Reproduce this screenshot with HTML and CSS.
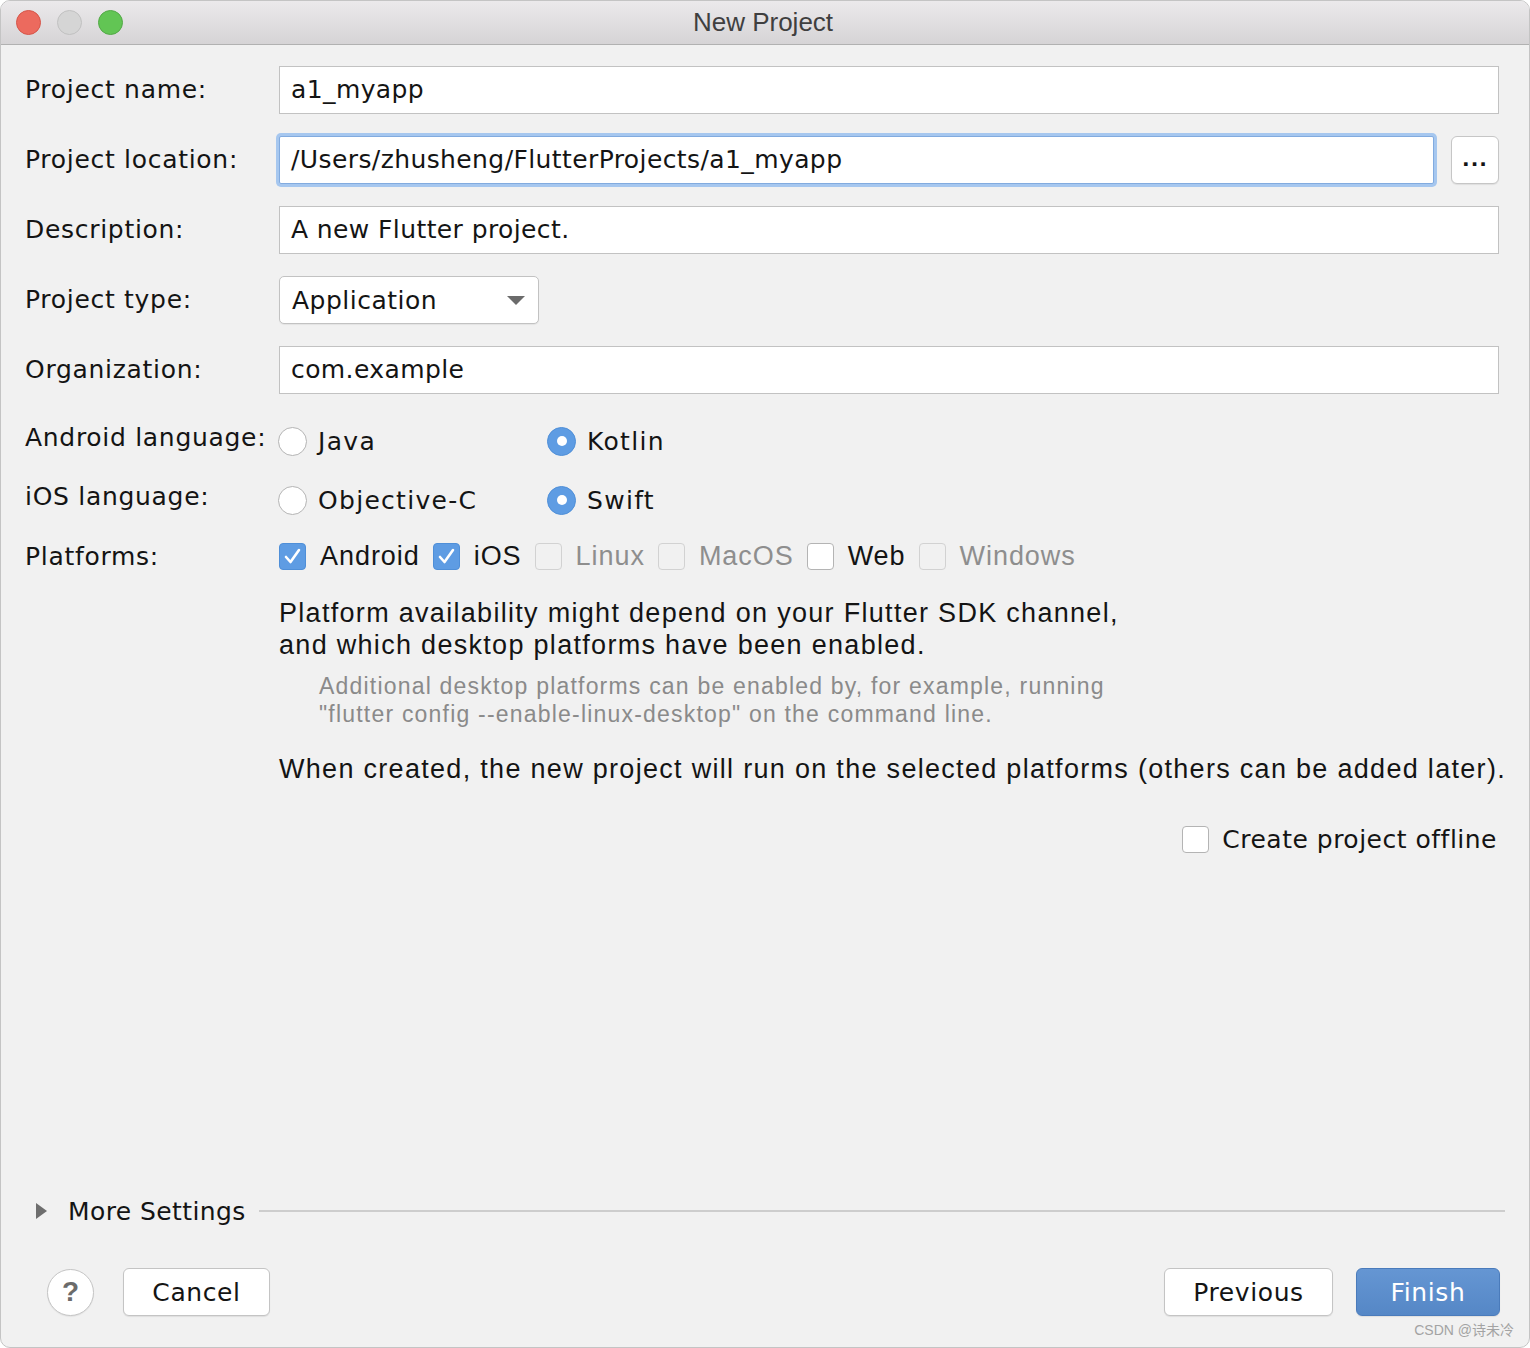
FILE: index.html
```html
<!DOCTYPE html>
<html lang="en">
<head>
<meta charset="utf-8">
<title>New Project</title>
<link rel="stylesheet" href="styles.css">
</head>
<body>
<div class="window">
  <div class="titlebar">
    <div class="lights">
      <span class="light red"></span>
      <span class="light gray"></span>
      <span class="light green"></span>
    </div>
    <div class="title">New Project</div>
    <div class="spacer"></div>
  </div>

  <div class="content">
    <div class="row field-row">
      <div class="label">Project name:</div>
      <div class="field">a1_myapp</div>
    </div>
    <div class="row field-row">
      <div class="label">Project location:</div>
      <div class="field focused">/Users/zhusheng/FlutterProjects/a1_myapp</div>
      <div class="browse">...</div>
    </div>
    <div class="row field-row">
      <div class="label">Description:</div>
      <div class="field">A new Flutter project.</div>
    </div>
    <div class="row field-row">
      <div class="label">Project type:</div>
      <div class="select">
        <span>Application</span>
        <svg class="arrow" width="18" height="10" viewBox="0 0 18 10"><path d="M0 0 H18 L9 9 Z" fill="#6b6b6b"/></svg>
      </div>
    </div>
    <div class="row field-row">
      <div class="label">Organization:</div>
      <div class="field">com.example</div>
    </div>

    <div class="row radio-row">
      <div class="label raised">Android language:</div>
      <div class="option first"><span class="radio"></span><span class="opt-text">Java</span></div>
      <div class="option"><span class="radio on"></span><span class="opt-text">Kotlin</span></div>
    </div>
    <div class="row radio-row">
      <div class="label raised">iOS language:</div>
      <div class="option first"><span class="radio"></span><span class="opt-text">Objective-C</span></div>
      <div class="option"><span class="radio on"></span><span class="opt-text">Swift</span></div>
    </div>
    <div class="row check-row">
      <div class="label flat">Platforms:</div>
      <div class="checks">
        <div class="check"><span class="box on"><svg width="27" height="27" viewBox="0 0 27 27"><path d="M7 14 L11.5 19 L20 7" fill="none" stroke="#fff" stroke-width="2.6" stroke-linecap="round" stroke-linejoin="round"/></svg></span><span class="check-text">Android</span></div>
        <div class="check"><span class="box on"><svg width="27" height="27" viewBox="0 0 27 27"><path d="M7 14 L11.5 19 L20 7" fill="none" stroke="#fff" stroke-width="2.6" stroke-linecap="round" stroke-linejoin="round"/></svg></span><span class="check-text">iOS</span></div>
        <div class="check disabled"><span class="box"></span><span class="check-text">Linux</span></div>
        <div class="check disabled"><span class="box"></span><span class="check-text">MacOS</span></div>
        <div class="check"><span class="box"></span><span class="check-text">Web</span></div>
        <div class="check disabled"><span class="box"></span><span class="check-text">Windows</span></div>
      </div>
    </div>

    <div class="notes">
      <p class="note">Platform availability might depend on your Flutter SDK channel,<br>and which desktop platforms have been enabled.</p>
      <p class="hint">Additional desktop platforms can be enabled by, for example, running<br>"flutter config --enable-linux-desktop" on the command line.</p>
      <p class="note when">When created, the new project will run on the selected platforms (others can be added later).</p>
    </div>

    <div class="offline">
      <span class="box"></span><span class="offline-text">Create project offline</span>
    </div>
  </div>

  <div class="more">
    <svg class="tri" width="11" height="16" viewBox="0 0 11 16"><path d="M0 0 L11 8 L0 16 Z" fill="#6e6e6e"/></svg>
    <span class="more-text">More Settings</span>
    <span class="rule"></span>
  </div>

  <div class="footer">
    <div class="help">?</div>
    <div class="btn cancel">Cancel</div>
    <div class="grow"></div>
    <div class="btn previous">Previous</div>
    <div class="btn finish">Finish</div>
  </div>

  <div class="watermark">CSDN @诗未冷</div>
</div>
</body>
</html>
```

FILE: styles.css
```css
* { box-sizing: border-box; }
html, body { margin: 0; padding: 0; background: #ffffff; }

.window {
  position: relative;
  width: 1530px;
  height: 1348px;
  background: #f1f1f1;
  border-radius: 10px;
  border: 1px solid #c4c4c4;
  overflow: hidden;
  display: flex;
  flex-direction: column;
  font-family: "DejaVu Sans", "Noto Sans", sans-serif;
  color: #141414;
}

/* Title bar */
.titlebar {
  height: 44px;
  flex: none;
  display: grid;
  grid-template-columns: 1fr auto 1fr;
  align-items: center;
  background: linear-gradient(#ebe9eb, #d6d4d6);
  border-bottom: 1px solid #b1b1b1;
}
.lights { display: flex; gap: 16px; padding-left: 15px; }
.light { width: 25px; height: 25px; border-radius: 50%; display: block; }
.light.red { background: #ec6a5e; border: 1px solid #d55549; }
.light.gray { background: #d5d5d5; border: 1px solid #c0c0c0; }
.light.green { background: #62c554; border: 1px solid #53a847; }
.title {
  font-family: "Liberation Sans", Arial, sans-serif;
  font-size: 26px;
  color: #3f3f3f;
  padding-right: 4px;
}

/* Content */
.content {
  padding: 21px 30px 0 24px;
  display: flex;
  flex-direction: column;
}
.row { display: flex; align-items: center; }
.label {
  width: 254px;
  flex: none;
  font-size: 25px;
  letter-spacing: 0.7px;
  padding-bottom: 2px;
  white-space: nowrap;
}
.label.raised { padding-bottom: 8px; }
.label.flat { padding-bottom: 0; }

.field-row { height: 48px; margin-bottom: 22px; }
.field {
  flex: 1;
  height: 48px;
  background: #fff;
  border: 1px solid #c2c2c2;
  padding-left: 11px;
  font-size: 25px;
  letter-spacing: 0.4px;
  line-height: 46px;
  white-space: nowrap;
}
.field.focused {
  margin-right: 17px;
  border-color: #82abdf;
  box-shadow: 0 0 0 3px #a6c7ef;
  border-radius: 2px;
}
.browse {
  width: 48px;
  height: 48px;
  flex: none;
  background: #fff;
  border: 1px solid #c6c6c6;
  border-radius: 6px;
  box-shadow: 0 1px 1px rgba(0,0,0,0.08);
  text-align: center;
  font-size: 20px;
  line-height: 44px;
  font-weight: bold;
  letter-spacing: 1px;
}
.select {
  width: 260px;
  height: 48px;
  background: #fff;
  border: 1px solid #c2c2c2;
  border-radius: 5px;
  box-shadow: 0 1px 1px rgba(0,0,0,0.06);
  display: flex;
  align-items: center;
  justify-content: space-between;
  padding: 0 13px 0 12px;
  font-size: 25px;
  letter-spacing: 0.5px;
}
.arrow { display: block; margin-top: 2px; }

/* Radios */
.radio-row { height: 50px; margin-bottom: 9px; }
.option { display: flex; align-items: center; }
.option.first { width: 269px; margin-left: -1px; }
.radio {
  width: 29px;
  height: 29px;
  border-radius: 50%;
  background: #fff;
  border: 1px solid #b4b4b4;
  display: block;
  flex: none;
}
.radio.on {
  background: #5e9ce3;
  border-color: #4f8fd8;
  display: flex;
  align-items: center;
  justify-content: center;
}
.radio.on::after {
  content: "";
  width: 10px;
  height: 10px;
  border-radius: 50%;
  background: #fff;
}
.opt-text {
  font-size: 25px;
  letter-spacing: 1.3px;
  margin-left: 11px;
}

/* Checkboxes */
.check-row { height: 44px; }
.checks { display: flex; align-items: center; gap: 13px; }
.check { display: flex; align-items: center; gap: 14px; }
.box {
  width: 27px;
  height: 27px;
  border-radius: 4px;
  background: #fff;
  border: 1px solid #b4b4b4;
  display: block;
  flex: none;
}
.box svg { display: block; margin: -1px; }
.box.on { background: #5e9ce3; border-color: #4f8fd8; }
.check.disabled .box { background: #f1f1f1; border-color: #d2d2d2; }
.check-text {
  font-family: "Liberation Sans", Arial, sans-serif;
  font-size: 27px;
  letter-spacing: 0.95px;
}
.check.disabled .check-text { color: #8e8e8e; }

/* Notes */
.notes { padding-left: 254px; margin-top: 19px; }
.notes p { margin: 0; font-family: "Liberation Sans", Arial, sans-serif; }
.note {
  font-size: 27px;
  line-height: 32px;
  letter-spacing: 1.3px;
  white-space: nowrap;
}
.notes .hint {
  margin-top: 11px;
  padding-left: 40px;
  font-size: 23px;
  line-height: 28px;
  letter-spacing: 1.2px;
  color: #8a8a8a;
  white-space: nowrap;
}
.notes .note.when { margin-top: 25px; }

.offline {
  display: flex;
  align-items: center;
  justify-content: flex-end;
  gap: 13px;
  height: 40px;
  margin-top: 34px;
  padding-right: 2px;
}
.offline-text { font-size: 25px; letter-spacing: 0.5px; }

/* More settings */
.more {
  margin-top: auto;
  height: 40px;
  display: flex;
  align-items: center;
  padding: 0 24px 0 35px;
  flex: none;
}
.tri { display: block; flex: none; }
.more-text { font-size: 25px; letter-spacing: 0.4px; margin-left: 21px; margin-right: 13px; }
.rule { flex: 1; height: 2px; background: #cdcdcd; }

/* Footer */
.footer {
  flex: none;
  display: flex;
  align-items: center;
  height: 48px;
  margin-top: 37px;
  margin-bottom: 31px;
  padding: 0 29px 0 46px;
}
.help {
  width: 47px;
  height: 47px;
  border-radius: 50%;
  border: 1px solid #c4c4c4;
  background: #fff;
  color: #6b6b6b;
  font-family: "Liberation Sans", Arial, sans-serif;
  font-weight: bold;
  font-size: 28px;
  display: flex;
  align-items: center;
  justify-content: center;
  box-shadow: 0 1px 1px rgba(0,0,0,0.06);
}
.grow { flex: 1; }
.btn {
  height: 48px;
  border-radius: 6px;
  background: #fff;
  border: 1px solid #c4c4c4;
  box-shadow: 0 1px 1px rgba(0,0,0,0.08);
  font-size: 25px;
  letter-spacing: 0.6px;
  display: flex;
  align-items: center;
  justify-content: center;
}
.cancel { width: 147px; margin-left: 29px; }
.previous { width: 169px; }
.finish {
  width: 144px;
  margin-left: 23px;
  background: linear-gradient(#6596d3, #5587c6);
  border-color: #4a7bbb;
  color: #fff;
}

.watermark {
  position: absolute;
  right: 15px;
  bottom: 8px;
  font-family: "Liberation Sans", "Noto Sans CJK SC", sans-serif;
  font-size: 14px;
  color: #a3a3a3;
}
```
